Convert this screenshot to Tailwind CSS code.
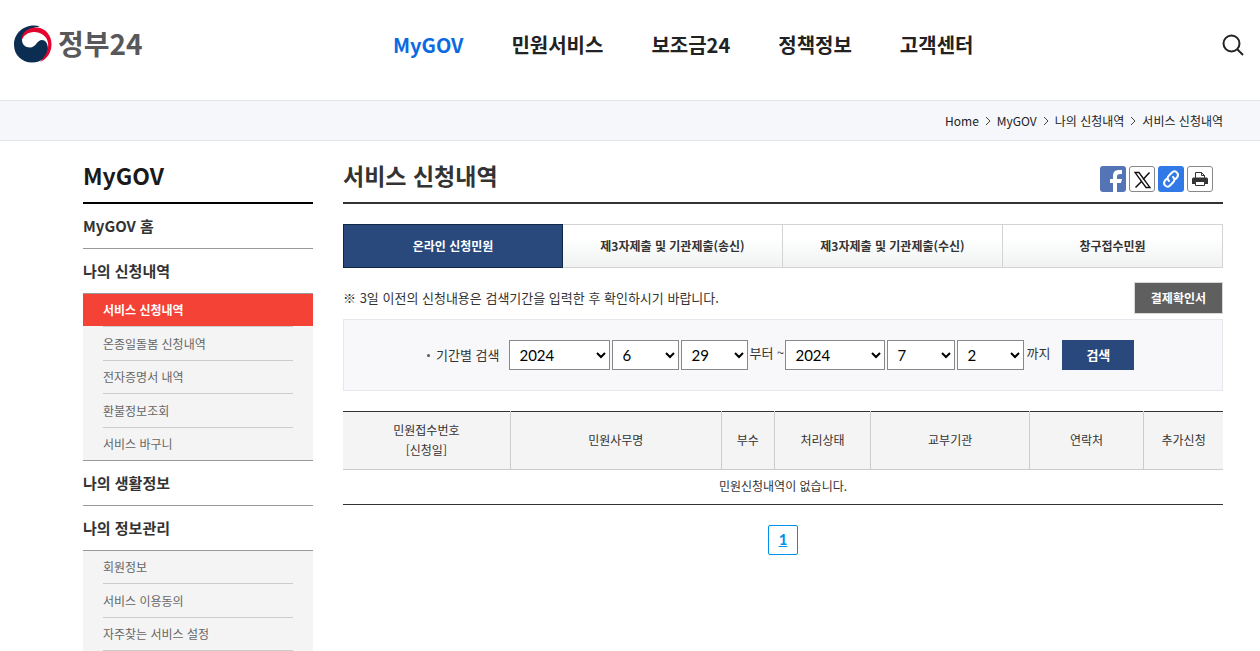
<!DOCTYPE html>
<html lang="ko">
<head>
  <meta charset="UTF-8">
  <title>서비스 신청내역 | 정부24</title>
  <meta name="viewport" content="width=device-width,initial-scale=1.0">
  <script src="https://cdn.jsdelivr.net/npm/@tailwindcss/browser@4"></script>
</head>
<body class="bg-white text-[#333] text-xs font-['Noto_Sans_CJK_KR',sans-serif] overflow-x-hidden">
  <!-- Header -->
  <header class="flex h-[100px] items-start pr-[15px] pl-3.5">
    <div class="w-[379px] shrink-0 pt-6">
      <a href="#" class="inline-flex h-10 items-center gap-1.5" aria-label="정부24">
        <svg class="size-[38px]" viewBox="0 0 38 38">
          <path d="M26 1.500C15-2 0 5 0 20c0 10 8 17.500 18 17.500S34 31 34 24c0-6-3-9-6-9-5 0-6 7.500-12 7.500-5 0-8-3.500-8-7.500C8 9 14 3 26 1.500z" fill="#0b2d52"/>
          <path d="M7.500 15.500C7 8 14 2 23 2.500 32 3 37.500 11 37.500 19c0 9-4.500 15-11.500 18 6-6 9-13 8-19C33 11 27 7 20 7c-6 0-10.500 3.500-12.500 8.500z" fill="#e4032e"/>
        </svg>
        <span class="text-[28px] font-bold text-[#58585a]">정부24</span>
      </a>
    </div>
    <nav class="mt-[30px] flex gap-12 text-[20px] leading-[30px] font-bold whitespace-nowrap text-[#222]">
      <a href="#" class="text-[#0b69e3]">MyGOV</a>
      <a href="#">민원서비스</a>
      <a href="#">보조금24</a>
      <a href="#">정책정보</a>
      <a href="#">고객센터</a>
    </nav>
    <button type="button" class="mt-[33px] ml-auto" aria-label="검색">
      <svg class="size-6" viewBox="0 0 24 24" fill="none" stroke="#222" stroke-width="2"><circle cx="10.500" cy="10.500" r="8"/><path d="M16.500 16.500L22 22"/></svg>
    </button>
  </header>

  <!-- Breadcrumb -->
  <nav class="flex h-[41px] items-center justify-end gap-1 border-y border-[#e3e5ea] bg-[#f5f7fb] pr-[37px] text-xs text-[#222]">
    <a href="#">Home</a>
    <svg class="h-2.5 w-2.5" viewBox="0 0 10 10" fill="none" stroke="#444"><path d="M3 1l4 4-4 4"/></svg>
    <a href="#">MyGOV</a>
    <svg class="h-2.5 w-2.5" viewBox="0 0 10 10" fill="none" stroke="#444"><path d="M3 1l4 4-4 4"/></svg>
    <a href="#">나의 신청내역</a>
    <svg class="h-2.5 w-2.5" viewBox="0 0 10 10" fill="none" stroke="#444"><path d="M3 1l4 4-4 4"/></svg>
    <a href="#">서비스 신청내역</a>
  </nav>

  <div class="flex gap-[30px] pr-[37px] pl-[83px]">
    <!-- Side menu -->
    <aside class="w-[230px] shrink-0">
      <h2 class="h-[63px] border-b-2 border-black pt-4 text-[23px] leading-9 font-bold text-[#1a1a1a]">MyGOV</h2>
      <ul class="text-[15px] font-bold">
        <li><a href="#" class="flex h-[45px] items-center border-b border-[#999]">MyGOV 홈</a></li>
        <li>
          <a href="#" class="flex h-[45px] items-center border-b border-[#999]">나의 신청내역</a>
          <ul class="border-b border-[#999] bg-[#f4f4f4] text-xs font-normal text-[#666]">
            <li class="bg-[#f44336] px-5 font-bold text-white"><a href="#" class="flex h-8 items-center">서비스 신청내역</a></li>
            <li class="px-5"><a href="#" class="flex h-[35px] items-center border-y border-[#ccc]">온종일돌봄 신청내역</a></li>
            <li class="px-5"><a href="#" class="flex h-[33px] items-center border-b border-[#ccc]">전자증명서 내역</a></li>
            <li class="px-5"><a href="#" class="flex h-[34px] items-center border-b border-[#ccc]">환불정보조회</a></li>
            <li class="px-5"><a href="#" class="flex h-8 items-center">서비스 바구니</a></li>
          </ul>
        </li>
        <li><a href="#" class="flex h-[45px] items-center border-b border-[#999]">나의 생활정보</a></li>
        <li>
          <a href="#" class="flex h-[45px] items-center border-b border-[#999]">나의 정보관리</a>
          <ul class="bg-[#f4f4f4] text-xs font-normal text-[#666]">
            <li class="px-5"><a href="#" class="flex h-[33px] items-center border-b border-[#ccc]">회원정보</a></li>
            <li class="px-5"><a href="#" class="flex h-[34px] items-center border-b border-[#ccc]">서비스 이용동의</a></li>
            <li class="px-5"><a href="#" class="flex h-[33px] items-center border-b border-[#ccc]">자주찾는 서비스 설정</a></li>
          </ul>
        </li>
      </ul>
    </aside>

    <!-- Content -->
    <main class="min-w-0 flex-1">
      <div class="flex h-[63px] items-start justify-between border-b-2 border-[#333] pr-2.5">
        <h1 class="pt-4 text-[23px] leading-9 font-bold">서비스 신청내역</h1>
        <div class="mt-[25px] flex gap-[3px]">
          <button type="button" aria-label="페이스북" class="size-[26px] overflow-hidden rounded-[3px] bg-[#5474b5]">
            <svg viewBox="0 0 26 26"><path d="M13 26V17h-3v-4h3v-3c0-4 2-6 6-6h3v4h-2c-2 0-3 1-3 2v3h5l-1 4h-4v9z" fill="#fff"/></svg>
          </button>
          <button type="button" aria-label="X" class="size-[26px] rounded-[3px] border border-[#888]">
            <svg viewBox="0 0 24 24" fill="none" stroke="#111"><path d="M5 5.500h4l11 15h-4z" stroke-width="1.300"/><path d="M19.500 5.500l-6.500 7M11.500 14.500L5.500 20.500" stroke-width="1.500"/></svg>
          </button>
          <button type="button" aria-label="링크 복사" class="size-[26px] rounded-[3px] bg-[#3079e6]">
            <svg viewBox="0 0 26 26" fill="none" stroke="#fff" stroke-width="2" stroke-linecap="round"><path d="M11 15c-1.800-1.800-1.500-4 0-5.500L14 6.500c3-3 8 1 5 5L17.500 13M15 11c1.800 1.800 1.500 4 0 5.500L12 19.500c-3 3-8-1-5-5L8.500 13"/></svg>
          </button>
          <button type="button" aria-label="인쇄" class="size-[26px] rounded-[3px] border border-[#888]">
            <svg viewBox="0 0 24 24"><path d="M5 10.500h14l1 1V17H4v-5.500z" fill="#333"/><path d="M7.500 11V5.500h6l3 3V11zM7.500 14.500h9v4h-9z" fill="#fff" stroke="#333"/><path d="M13.500 5.500v3h3" fill="none" stroke="#333"/></svg>
          </button>
        </div>
      </div>

      <ul class="mt-5 grid h-11 grid-cols-4 text-xs font-bold">
        <li><a href="#" class="flex h-11 items-center justify-center border border-[#0f2747] bg-[#29497d] text-white">온라인 신청민원</a></li>
        <li><a href="#" class="flex h-11 items-center justify-center border border-l-0 border-[#d3d3d3] bg-linear-to-b from-white from-30% to-[#f0f2f2]">제3자제출 및 기관제출(송신)</a></li>
        <li><a href="#" class="flex h-11 items-center justify-center border border-l-0 border-[#d3d3d3] bg-linear-to-b from-white from-30% to-[#f0f2f2]">제3자제출 및 기관제출(수신)</a></li>
        <li><a href="#" class="flex h-11 items-center justify-center border border-l-0 border-[#d3d3d3] bg-linear-to-b from-white from-30% to-[#f0f2f2]">창구접수민원</a></li>
      </ul>

      <div class="flex h-[51px] items-start justify-between pt-3.5">
        <p class="pt-1.5 text-[13px] leading-5">※ 3일 이전의 신청내용은 검색기간을 입력한 후 확인하시기 바랍니다.</p>
        <button type="button" class="h-8 border border-[#d8d8d8] bg-[#5f5f5f] px-4 text-xs font-bold text-white">결제확인서</button>
      </div>

      <form class="flex h-[72px] items-center border border-[#e7e7ed] bg-[#f8f8fb] pl-[83px] text-[13px]">
        <span class="mr-1.5 size-[3px] rounded-full bg-[#555]"></span>
        <label for="from-year" class="mr-2.5">기간별 검색</label>
        <div class="flex gap-[2px] font-[Lato,sans-serif] text-[15px] text-black">
          <select id="from-year" class="h-[30px] w-[101px] border border-[#888] bg-white pl-[5px]"><option>2024</option></select>
          <select aria-label="시작 월" class="h-[30px] w-[67px] border border-[#888] bg-white pl-[5px]"><option>6</option></select>
          <select aria-label="시작 일" class="h-[30px] w-[67px] border border-[#888] bg-white pl-[5px]"><option>29</option></select>
        </div>
        <span class="w-[37px] pb-1 text-center">부터 ~</span>
        <div class="flex gap-[2px] font-[Lato,sans-serif] text-[15px] text-black">
          <select aria-label="종료 연도" class="h-[30px] w-[100px] border border-[#888] bg-white pl-[5px]"><option>2024</option></select>
          <select aria-label="종료 월" class="h-[30px] w-[68px] border border-[#888] bg-white pl-[5px]"><option>7</option></select>
          <select aria-label="종료 일" class="h-[30px] w-[67px] border border-[#888] bg-white pl-[5px]"><option>2</option></select>
        </div>
        <span class="ml-0.5 pb-1">까지</span>
        <button type="button" class="ml-3 h-[30px] w-[72px] bg-[#29497d] font-bold text-white">검색</button>
      </form>

      <table class="mt-5 w-full table-fixed border-y border-[#333] text-xs leading-5">
        <colgroup>
          <col class="w-[19%]"><col class="w-[24%]"><col class="w-[6%]"><col class="w-[11%]"><col class="w-[18%]"><col class="w-[13%]"><col class="w-[9%]">
        </colgroup>
        <thead class="border-b border-[#ccc] bg-[#f4f4f4]">
          <tr class="h-[58px] *:border-r *:border-[#ccc] *:pb-0.5 *:font-normal *:last:border-r-0">
            <th>민원접수번호<br>[신청일]</th>
            <th>민원사무명</th>
            <th>부수</th>
            <th>처리상태</th>
            <th>교부기관</th>
            <th>연락처</th>
            <th>추가신청</th>
          </tr>
        </thead>
        <tbody>
          <tr class="h-[35px]"><td colspan="7" class="pb-0.5 text-center">민원신청내역이 없습니다.</td></tr>
        </tbody>
      </table>

      <div class="mt-5 flex justify-center">
        <a href="#" class="flex size-[30px] items-center justify-center rounded-[2px] border border-[#0090e9] font-[Lato,sans-serif] text-[15px] font-bold text-[#0090e9] underline">1</a>
      </div>
    </main>
  </div>
</body>
</html>
